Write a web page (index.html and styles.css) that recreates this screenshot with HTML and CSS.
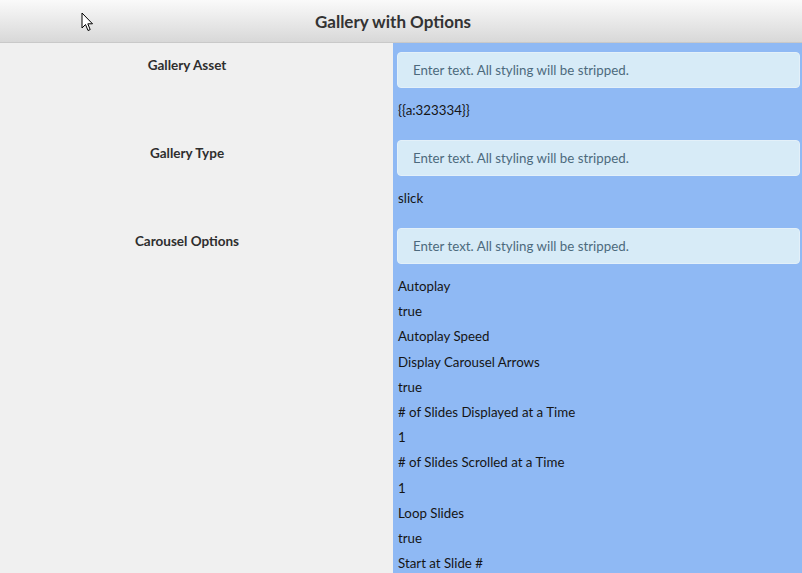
FILE: index.html
```html
<!DOCTYPE html>
<html>

<head>
    <title>Gallery with Options</title>
    <link rel="stylesheet" href="styles.css">
</head>

<body>
    <header class="topbar">
        <h1 class="title">Gallery with Options</h1>
    </header>

    <div class="fields">
        <div class="field">
            <label class="field-label" for="asset">Gallery Asset</label>
            <div class="field-body">
                <input id="asset" class="field-input" type="text" placeholder="Enter text. All styling will be stripped.">
                <div class="values">
                    <p>{{a:323334}}</p>
                </div>
            </div>
        </div>

        <div class="field">
            <label class="field-label" for="type">Gallery Type</label>
            <div class="field-body">
                <input id="type" class="field-input" type="text" placeholder="Enter text. All styling will be stripped.">
                <div class="values">
                    <p>slick</p>
                </div>
            </div>
        </div>

        <div class="field">
            <label class="field-label" for="carousel">Carousel Options</label>
            <div class="field-body">
                <input id="carousel" class="field-input" type="text" placeholder="Enter text. All styling will be stripped.">
                <div class="values">
                    <p>Autoplay</p>
                    <p>true</p>
                    <p>Autoplay Speed</p>
                    <p>Display Carousel Arrows</p>
                    <p>true</p>
                    <p># of Slides Displayed at a Time</p>
                    <p>1</p>
                    <p># of Slides Scrolled at a Time</p>
                    <p>1</p>
                    <p>Loop Slides</p>
                    <p>true</p>
                    <p>Start at Slide #</p>
                </div>
            </div>
        </div>
    </div>

    <svg class="cursor" width="13" height="21" viewBox="0 0 13 21">
        <path d="M1 1 L1 16 L4.5 12.5 L7 18.5 L9.2 17.6 L6.8 11.8 L11.5 11.8 Z" fill="#fff" stroke="#000" stroke-width="1" stroke-linejoin="round" />
    </svg>
</body>

</html>
```

FILE: styles.css
```css
html,
body {
    margin: 0;
    padding: 0;
    overflow: hidden;
}

body {
    font-family: Lato, "Open Sans", sans-serif;
    font-size: 13.3px;
    color: #151515;
    background-color: #f0f0f0;
}

.topbar {
    height: 42px;
    display: flex;
    align-items: center;
    justify-content: center;
    padding-right: 16px;
    background: linear-gradient(#fafafa, #d8d8d8);
    border-bottom: 1px solid #c9c9c9;
}

.title {
    margin: 0;
    font-size: 17px;
    font-weight: bold;
    color: #333;
}

.field {
    display: grid;
    grid-template-columns: 393px 1fr;
}

.field-label {
    display: block;
    padding: 11.5px 19px 0 0;
    line-height: 20px;
    text-align: center;
    font-size: 13.5px;
    font-weight: bold;
    color: #2e2e2e;
}

.field-body {
    background-color: #8fb9f4;
    padding: 9px 2px 8.5px 4px;
}

.field-input {
    display: block;
    box-sizing: border-box;
    width: 100%;
    height: 36px;
    padding: 0 15px;
    border: 1px solid #e3f0f9;
    border-radius: 4px;
    background-color: #d7ebf7;
    font-family: inherit;
    font-size: 13.3px;
    color: #333;
}

.field-input::placeholder {
    color: #4c6a7d;
}

.values {
    margin-top: 9.5px;
    padding-left: 1px;
}

.values p {
    margin: 0;
    line-height: 25.2px;
}

.cursor {
    position: absolute;
    left: 81px;
    top: 12px;
}
```
